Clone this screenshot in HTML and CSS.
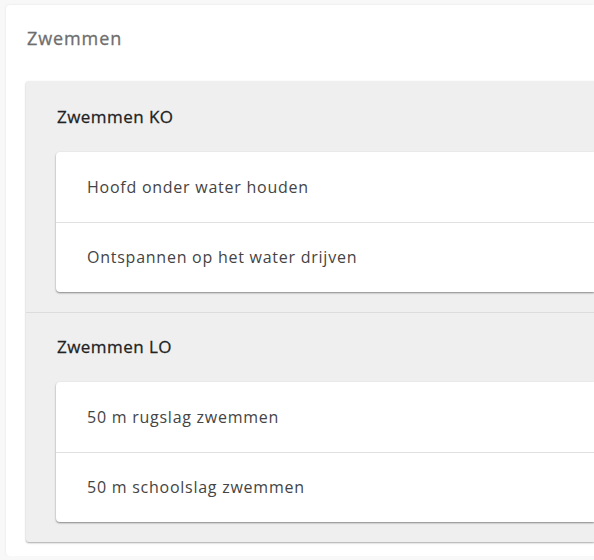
FILE: index.html
```html
<!DOCTYPE html>
<html lang="nl">
<head>
<meta charset="utf-8">
<title>Zwemmen</title>
<link rel="stylesheet" href="styles.css">
</head>
<body>
<div class="card">
  <h2 class="card-title">Zwemmen</h2>
  <div class="panel">
    <section class="group">
      <h3 class="group-title">Zwemmen KO</h3>
      <ul class="list">
        <li class="item">Hoofd onder water houden</li>
        <li class="item">Ontspannen op het water drijven</li>
      </ul>
    </section>
    <section class="group">
      <h3 class="group-title">Zwemmen LO</h3>
      <ul class="list">
        <li class="item">50 m rugslag zwemmen</li>
        <li class="item">50 m schoolslag zwemmen</li>
      </ul>
    </section>
  </div>
</div>
</body>
</html>
```
FILE: styles.css
```css
html, body {
  margin: 0;
  padding: 0;
  background: #f8f8f8;
  font-family: "Open Sans", "Noto Sans", sans-serif;
  overflow: hidden;
}
body {
  padding: 5px 0 0 6px;
}
.card {
  background: #ffffff;
  border-radius: 4px 0 0 4px;
  box-shadow: 0 0 3px rgba(0,0,0,0.08);
  padding: 22px 0 14px 20px;
}
.card-title {
  margin: 0 0 0 1px;
  font-size: 18px;
  line-height: 22px;
  font-weight: 400;
  color: #6e6e6e;
  letter-spacing: 0.9px;
  -webkit-text-stroke: 0.3px #6e6e6e;
  height: 22px;
}
.panel {
  margin-top: 32px;
  background: #efefef;
  border-radius: 3px 0 0 3px;
  box-shadow: 0 1px 2px rgba(0,0,0,0.35);
}
.group {
  padding: 26px 0 20px 30px;
}
.group + .group {
  border-top: 1px solid #dcdcdc;
  padding-top: 24px;
}
.group-title {
  margin: 0 0 25px 1px;
  font-size: 17px;
  line-height: 20px;
  font-weight: 400;
  color: #222;
  letter-spacing: 0.45px;
  -webkit-text-stroke: 0.28px #222;
}
.list {
  list-style: none;
  margin: 0;
  padding: 0;
  background: #fff;
  border-radius: 4px 0 0 4px;
  box-shadow: 0 1px 2px rgba(0,0,0,0.45);
}
.item {
  height: 70px;
  line-height: 70px;
  padding-left: 31px;
  font-size: 16px;
  color: #444;
  letter-spacing: 0.75px;
}
.item + .item {
  border-top: 1px solid #e0e0e0;
  height: 69px;
  line-height: 69px;
}
```
